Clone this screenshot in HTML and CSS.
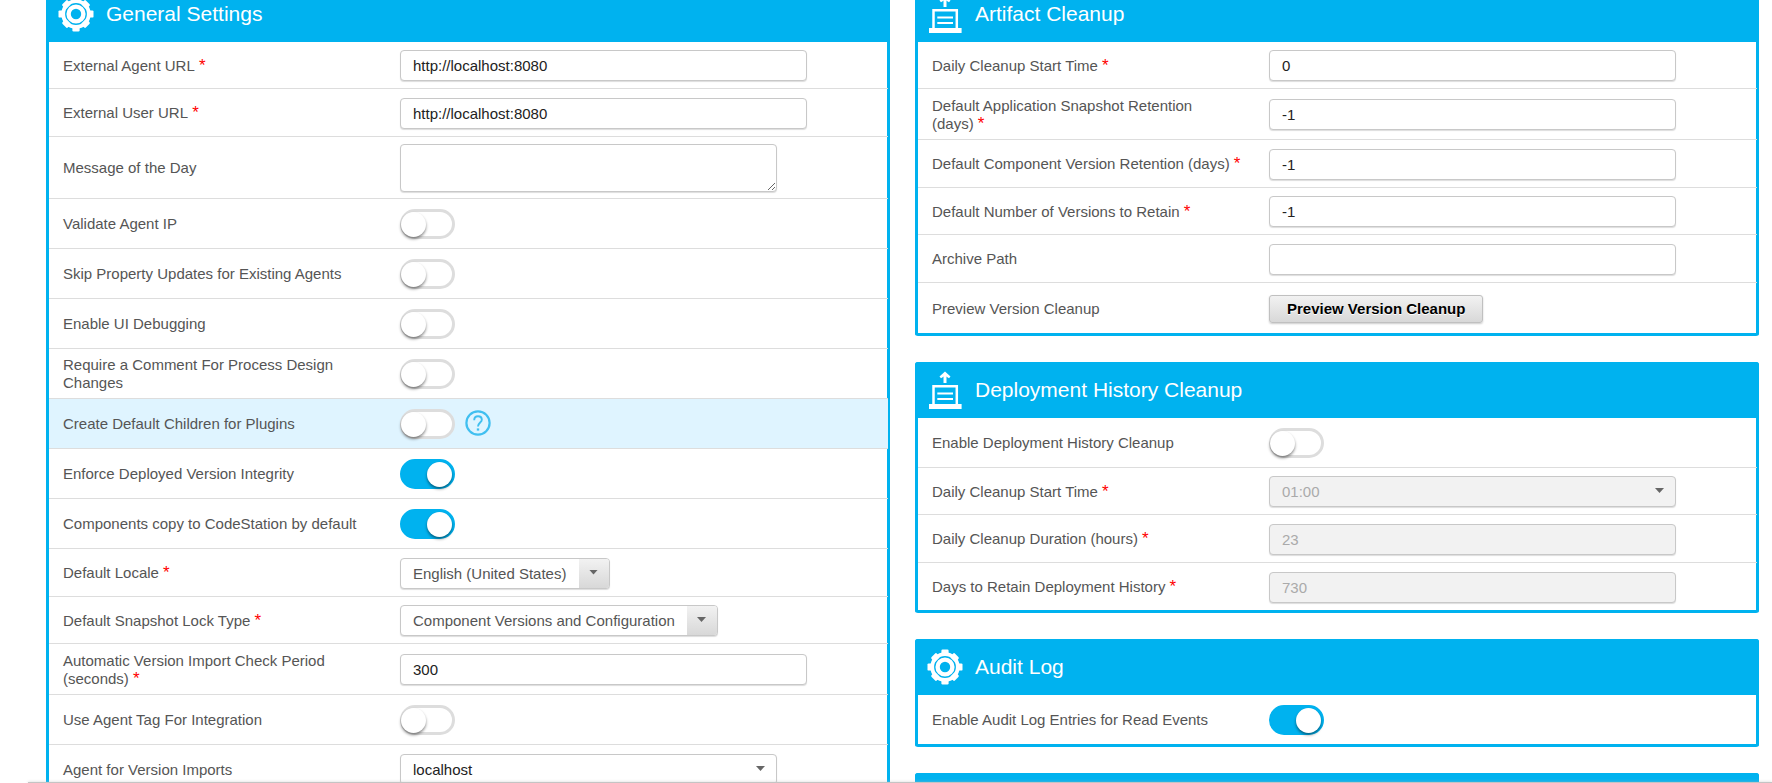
FILE: index.html
```html
<!DOCTYPE html>
<html lang="en">
<head>
<meta charset="utf-8">
<meta name="viewport" content="width=device-width, initial-scale=1">
<title>System Settings</title>
<link rel="stylesheet" href="styles.css">
</head>
<body>
<svg class="sprite" aria-hidden="true">
  <symbol id="gear" viewBox="0 0 36 36">
    <g fill="currentColor">
      <rect id="tooth" x="14.4" y="0.5" width="7.200" height="6" rx="1.200"/>
      <rect id="corner" x="14.2" y="1.4" width="7.600" height="6" rx="1.500" transform="rotate(45 18 18)"/>
      <use href="#tooth" transform="rotate(90 18 18)"/>
      <use href="#corner" transform="rotate(90 18 18)"/>
      <use href="#tooth" transform="rotate(180 18 18)"/>
      <use href="#corner" transform="rotate(180 18 18)"/>
      <use href="#tooth" transform="rotate(270 18 18)"/>
      <use href="#corner" transform="rotate(270 18 18)"/>
    </g>
    <circle cx="18" cy="18" r="12.800" fill="none" stroke="currentColor" stroke-width="3.800"/>
    <circle cx="18" cy="18" r="7.400" fill="none" stroke="currentColor" stroke-width="4.400"/>
  </symbol>
  <symbol id="archive" viewBox="0 0 36 38">
    <path d="M18 12V4" fill="none" stroke="currentColor" stroke-width="3"/>
    <path d="M18 0.500L23.500 5.500L22 7.200L18 4.800L14 7.200L12.500 5.500Z" fill="currentColor"/>
    <path d="M6.500 34V15.200H29.800V34" fill="none" stroke="currentColor" stroke-width="2.500"/>
    <path d="M10.300 22.500H26M10.300 28H26" stroke="currentColor" stroke-width="2.200"/>
    <path d="M2 33H34.600V38H2Z" fill="currentColor"/>
  </symbol>
</svg>

<main class="viewport">
  <div class="columns">
    <div class="column">
      <section class="panel">
        <h2 class="panel-head"><svg class="head-icon"><use href="#gear"/></svg>General Settings</h2>
        <div class="row row--compact">
          <label class="label" for="agent-url">External Agent URL&nbsp;<span class="req">*</span></label>
          <div class="control"><input class="field" id="agent-url" type="text" value="http://localhost:8080"></div>
        </div>
        <div class="row">
          <label class="label" for="user-url">External User URL&nbsp;<span class="req">*</span></label>
          <div class="control"><input class="field" id="user-url" type="text" value="http://localhost:8080"></div>
        </div>
        <div class="row row--area">
          <label class="label" for="motd">Message of the Day</label>
          <div class="control"><textarea class="field field--area" id="motd"></textarea></div>
        </div>
        <div class="row row--toggle">
          <label class="label" for="validate-ip">Validate Agent IP</label>
          <div class="control"><input class="toggle" id="validate-ip" type="checkbox"></div>
        </div>
        <div class="row row--toggle">
          <label class="label" for="skip-updates">Skip Property Updates for Existing Agents</label>
          <div class="control"><input class="toggle" id="skip-updates" type="checkbox"></div>
        </div>
        <div class="row row--toggle">
          <label class="label" for="ui-debug">Enable UI Debugging</label>
          <div class="control"><input class="toggle" id="ui-debug" type="checkbox"></div>
        </div>
        <div class="row row--toggle">
          <label class="label" for="require-comment">Require a Comment For Process Design Changes</label>
          <div class="control"><input class="toggle" id="require-comment" type="checkbox"></div>
        </div>
        <div class="row row--toggle row--active">
          <label class="label" for="plugin-children">Create Default Children for Plugins</label>
          <div class="control">
            <input class="toggle" id="plugin-children" type="checkbox">
            <button class="help" type="button" aria-label="Help">
              <svg class="help-icon" viewBox="0 0 26 26" fill="none" stroke="currentColor">
                <circle cx="13" cy="13" r="11.600" stroke-width="2.200"/>
                <path d="M9.200 10.200C9.200 7.800 10.800 6.300 13 6.300S16.800 7.700 16.800 9.800C16.800 12.500 13 12.800 13 16.600" stroke-width="1.900"/>
                <path d="M13 18.400V20.600" stroke-width="2.400"/>
              </svg>
            </button>
          </div>
        </div>
        <div class="row row--toggle">
          <label class="label" for="enforce-integrity">Enforce Deployed Version Integrity</label>
          <div class="control"><input class="toggle" id="enforce-integrity" type="checkbox" checked></div>
        </div>
        <div class="row row--toggle">
          <label class="label" for="codestation">Components copy to CodeStation by default</label>
          <div class="control"><input class="toggle" id="codestation" type="checkbox" checked></div>
        </div>
        <div class="row">
          <label class="label" for="locale">Default Locale&nbsp;<span class="req">*</span></label>
          <div class="control"><span class="select select--split"><select class="field" id="locale"><option>English (United States)</option></select></span></div>
        </div>
        <div class="row row--compact">
          <label class="label" for="lock-type">Default Snapshot Lock Type&nbsp;<span class="req">*</span></label>
          <div class="control"><span class="select select--split"><select class="field" id="lock-type"><option>Component Versions and Configuration</option></select></span></div>
        </div>
        <div class="row row--double">
          <label class="label" for="check-period">Automatic Version Import Check Period (seconds)&nbsp;<span class="req">*</span></label>
          <div class="control"><input class="field" id="check-period" type="text" value="300"></div>
        </div>
        <div class="row row--toggle">
          <label class="label" for="agent-tag">Use Agent Tag For Integration</label>
          <div class="control"><input class="toggle" id="agent-tag" type="checkbox"></div>
        </div>
        <div class="row">
          <label class="label" for="import-agent">Agent for Version Imports</label>
          <div class="control"><span class="select select--medium"><select class="field" id="import-agent"><option>localhost</option></select></span></div>
        </div>
      </section>
    </div>

    <div class="column">
      <section class="panel">
        <h2 class="panel-head"><svg class="head-icon"><use href="#archive"/></svg>Artifact Cleanup</h2>
        <div class="row row--compact">
          <label class="label" for="artifact-start">Daily Cleanup Start Time&nbsp;<span class="req">*</span></label>
          <div class="control"><input class="field" id="artifact-start" type="text" value="0"></div>
        </div>
        <div class="row row--double">
          <label class="label" for="snapshot-days">Default Application Snapshot Retention (days)&nbsp;<span class="req">*</span></label>
          <div class="control"><input class="field" id="snapshot-days" type="text" value="-1"></div>
        </div>
        <div class="row">
          <label class="label" for="version-days">Default Component Version Retention (days)&nbsp;<span class="req">*</span></label>
          <div class="control"><input class="field" id="version-days" type="text" value="-1"></div>
        </div>
        <div class="row row--compact">
          <label class="label" for="version-count">Default Number of Versions to Retain&nbsp;<span class="req">*</span></label>
          <div class="control"><input class="field" id="version-count" type="text" value="-1"></div>
        </div>
        <div class="row">
          <label class="label" for="archive-path">Archive Path</label>
          <div class="control"><input class="field" id="archive-path" type="text"></div>
        </div>
        <div class="row row--toggle">
          <label class="label" for="preview">Preview Version Cleanup</label>
          <div class="control"><button class="button" id="preview" type="button">Preview Version Cleanup</button></div>
        </div>
      </section>

      <section class="panel">
        <h2 class="panel-head"><svg class="head-icon"><use href="#archive"/></svg>Deployment History Cleanup</h2>
        <div class="row row--toggle">
          <label class="label" for="history-enable">Enable Deployment History Cleanup</label>
          <div class="control"><input class="toggle" id="history-enable" type="checkbox"></div>
        </div>
        <div class="row row--compact">
          <label class="label" for="history-start">Daily Cleanup Start Time&nbsp;<span class="req">*</span></label>
          <div class="control"><span class="select select--wide"><select class="field" id="history-start" disabled><option>01:00</option></select></span></div>
        </div>
        <div class="row">
          <label class="label" for="history-duration">Daily Cleanup Duration (hours)&nbsp;<span class="req">*</span></label>
          <div class="control"><input class="field" id="history-duration" type="text" value="23" disabled></div>
        </div>
        <div class="row row--compact">
          <label class="label" for="history-days">Days to Retain Deployment History&nbsp;<span class="req">*</span></label>
          <div class="control"><input class="field" id="history-days" type="text" value="730" disabled></div>
        </div>
      </section>

      <section class="panel">
        <h2 class="panel-head"><svg class="head-icon"><use href="#gear"/></svg>Audit Log</h2>
        <div class="row row--toggle row--compact">
          <label class="label" for="audit-read">Enable Audit Log Entries for Read Events</label>
          <div class="control"><input class="toggle" id="audit-read" type="checkbox" checked></div>
        </div>
      </section>

      <section class="panel">
        <h2 class="panel-head"><svg class="head-icon"><use href="#gear"/></svg></h2>
      </section>
    </div>
  </div>
</main>
<footer class="footer"></footer>
</body>
</html>
```

FILE: styles.css
```css
* {
  box-sizing: border-box;
}

body {
  display: flex;
  flex-direction: column;
  height: 100vh;
  margin: 0;
  overflow: hidden;
  background: #fff;
  color: #555;
  font: 15px "Liberation Sans", Arial, sans-serif;
}

.sprite {
  display: none;
}

.viewport {
  flex: 1;
  min-height: 0;
  overflow: hidden;
  padding: 0 13px 0 46px;
}

.columns {
  display: grid;
  grid-template-columns: 1fr 1fr;
  gap: 25px;
  align-items: start;
  /* the page rests slightly scrolled */
  margin-top: -14px;
}

.column {
  display: flex;
  flex-direction: column;
  gap: 26px;
}

.panel {
  border: 3px solid #00b2ef;
  border-top: 0;
  border-radius: 3px;
}

.panel-head {
  display: flex;
  align-items: center;
  gap: 12px;
  height: 56px;
  margin: 0 -3px;
  padding: 0 12px;
  border-radius: 3px 3px 0 0;
  background: #00b2ef;
  color: #fff;
  font-size: 21px;
  font-weight: normal;
}

.head-icon {
  width: 36px;
  height: 38px;
}

.row {
  display: grid;
  grid-template-columns: 351px 1fr;
  align-items: center;
  min-height: 48px;
  margin-right: -1px;
  padding-top: 1px;
  border-bottom: 1px solid #ddd;
}

.row:last-child {
  margin-right: 0;
  border-bottom: 0;
}

.row--compact {
  min-height: 47px;
}

.row--toggle {
  min-height: 50px;
}

.row--toggle.row--compact {
  min-height: 49px;
}

.row--double {
  min-height: 51px;
}

.row--area {
  min-height: 62px;
}

.row--active {
  background: #dff4ff;
}

.label {
  padding: 0 25px 0 14px;
  line-height: 18px;
}

.req {
  color: #f00;
  font-size: 17px;
  line-height: 1;
}

.control {
  display: flex;
  align-items: center;
  gap: 10px;
}

.field {
  width: 407px;
  height: 31px;
  margin: 0;
  padding: 0 12px;
  border: 1px solid #c8c8c8;
  border-radius: 4px;
  background: #fff;
  box-shadow: 0 1px 1px #ddd;
  color: #222;
  font: inherit;
}

.field:disabled {
  background: #f2f2f2;
  color: #aaa;
  opacity: 1;
}

.field--area {
  width: 377px;
  height: 48px;
  resize: both;
}

.select {
  position: relative;
  display: inline-flex;
}

.select .field {
  width: 100%;
  padding-right: 42px;
  appearance: none;
}

.select::before {
  content: "";
  position: absolute;
  z-index: 1;
  top: 12px;
  right: 12px;
  width: 9px;
  height: 5px;
  background: #666;
  clip-path: polygon(0 0, 100% 0, 50% 100%);
  pointer-events: none;
}

.select--medium {
  width: 377px;
}

.select--wide {
  width: 407px;
}

.select--split .field {
  color: #555;
}

.select--split::after {
  content: "";
  position: absolute;
  top: 1px;
  right: 1px;
  bottom: 1px;
  width: 30px;
  border-radius: 0 3px 3px 0;
  background: linear-gradient(#f2f2f2, #d8d8d8);
  pointer-events: none;
}

.toggle {
  position: relative;
  width: 55px;
  height: 30px;
  margin: 0;
  border: 3px solid #ddd;
  border-radius: 15px;
  background: #fff;
  appearance: none;
}

.toggle::before {
  content: "";
  position: absolute;
  top: 0;
  left: -2px;
  width: 25px;
  height: 25px;
  border-radius: 50%;
  background: #fff;
  box-shadow: 0 2px 3px rgba(0, 0, 0, 0.45);
}

.toggle:checked {
  border-color: #00b2ef;
  background: #00b2ef;
}

.toggle:checked::before {
  left: 24px;
}

.help {
  display: flex;
  margin: 0;
  padding: 0 0 2px;
  border: 0;
  background: none;
  color: #40bff0;
}

.help-icon {
  width: 26px;
  height: 26px;
}

.button {
  height: 28px;
  padding: 0 17px;
  border: 1px solid #c0c0c0;
  border-radius: 3px;
  background: linear-gradient(#f2f2f2, #d8d8d8);
  box-shadow: 0 1px 2px #ccc;
  color: #000;
  font: bold 15px "Liberation Sans", Arial, sans-serif;
  text-shadow: 0 1px 0 #fff;
}

.footer {
  position: relative;
  height: 1px;
  margin-left: 28px;
  background: #c4c4c4;
  box-shadow: 0 0 3px #bbb;
}
```
